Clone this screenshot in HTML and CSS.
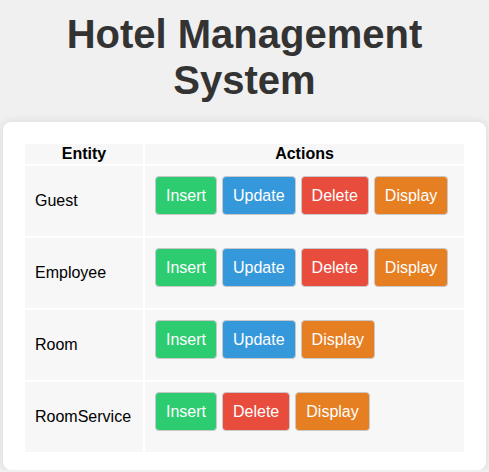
FILE: index.html
```html
<!DOCTYPE html>
<html>
<head>
<meta charset="utf-8">
<title>Hotel Management System</title>
<link rel="stylesheet" href="styles.css">
</head>
<body>
<h1 class="title">Hotel Management System</h1>
<div class="card">
  <table class="grid">
    <thead>
      <tr><th class="entity-col">Entity</th><th>Actions</th></tr>
    </thead>
    <tbody>
      <tr>
        <td class="entity">Guest</td>
        <td class="actions"><div class="btns"><button class="btn insert">Insert</button><button class="btn update">Update</button><button class="btn delete">Delete</button><button class="btn display">Display</button></div></td>
      </tr>
      <tr>
        <td class="entity">Employee</td>
        <td class="actions"><div class="btns"><button class="btn insert">Insert</button><button class="btn update">Update</button><button class="btn delete">Delete</button><button class="btn display">Display</button></div></td>
      </tr>
      <tr>
        <td class="entity">Room</td>
        <td class="actions"><div class="btns"><button class="btn insert">Insert</button><button class="btn update">Update</button><button class="btn display">Display</button></div></td>
      </tr>
      <tr>
        <td class="entity">RoomService</td>
        <td class="actions"><div class="btns"><button class="btn insert">Insert</button><button class="btn delete">Delete</button><button class="btn display">Display</button></div></td>
      </tr>
    </tbody>
  </table>
</div>
</body>
</html>
```
FILE: styles.css
```css
html, body {
  margin: 0;
  padding: 0;
}
body {
  background: #f0f0f0;
  font-family: "Liberation Sans", Arial, sans-serif;
  color: #000;
}
.title {
  margin: 11px 0 19px;
  font-size: 40px;
  line-height: 46px;
  font-weight: bold;
  text-align: center;
  color: #333;
}
.card {
  margin: 0 3px;
  background: #fff;
  border-radius: 8px;
  padding: 20px 20px 16px;
  box-shadow: 0 0 10px rgba(0, 0, 0, 0.1);
}
.grid {
  width: 100%;
  border-spacing: 2px;
  font-size: 16px;
}
.grid th {
  background: #f7f7f7;
  padding: 1px;
  line-height: 18px;
  font-weight: bold;
  text-align: center;
}
.entity-col {
  width: 116px;
}
.grid td {
  background: #f7f7f7;
  padding: 10px;
  vertical-align: middle;
}
.entity {
  line-height: 18px;
}
.actions {
  vertical-align: top;
}
.btns {
  display: flex;
  gap: 5px;
  padding-bottom: 11px;
}
.btn {
  font-family: "Liberation Sans", Arial, sans-serif;
  font-size: 16px;
  line-height: 17px;
  color: #fff;
  padding: 10px 10px;
  border: 1px solid #c8c8c8;
  border-radius: 4px;
  margin: 0;
  cursor: pointer;
}
.insert { background: #2ecc71; }
.update { background: #3498db; }
.delete { background: #e74c3c; }
.display { background: #e67e22; }
```
